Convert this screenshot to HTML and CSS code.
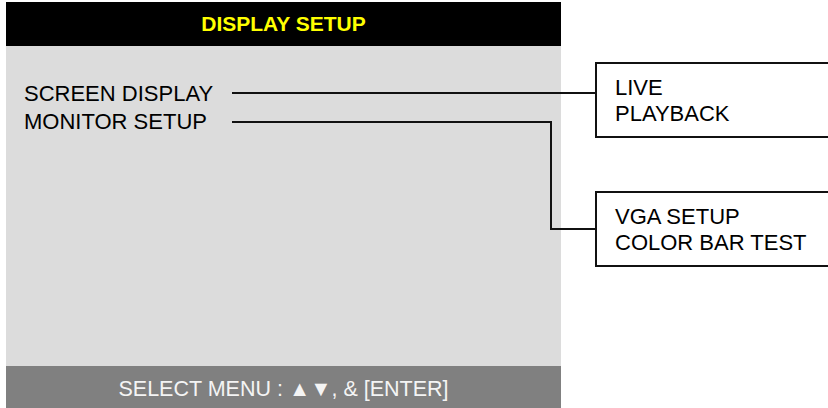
FILE: index.html
```html
<!DOCTYPE html>
<html lang="en">
<head>
<meta charset="UTF-8" />
<title>Display Setup</title>
<link rel="stylesheet" href="styles.css">
</head>
<body>

<div class="stage">
  <!-- OSD panel -->
  <div class="panel">
    <div class="panel-title">DISPLAY SETUP</div>
    <div class="panel-body">
      <div class="menu-item">SCREEN DISPLAY</div>
      <div class="menu-item">MONITOR SETUP</div>
    </div>
    <div class="panel-footer">SELECT MENU : &#9650;&#9660;, &amp; [ENTER]</div>
  </div>

  <!-- sub menus -->
  <div class="submenus">
    <div class="submenu">
      <div>LIVE</div>
      <div>PLAYBACK</div>
    </div>
    <div class="submenu">
      <div>VGA SETUP</div>
      <div>COLOR BAR TEST</div>
    </div>
  </div>

  <!-- connector lines -->
  <svg class="links" width="828" height="408" viewBox="0 0 828 408">
    <path d="M232 93 H597" />
    <path d="M232 122 H551 V229 H597" />
  </svg>
</div>

</body>
</html>
```

FILE: styles.css
```css
/* base */
html, body {
  margin: 0;
  height: 100%;
  overflow: hidden;
}
body {
  background: #fff;
  font-family: "Liberation Sans", Arial, sans-serif;
  font-size: 22px;
  color: #000;
}

.stage {
  position: relative;
  display: flex;
  align-items: flex-start;
  padding-top: 2px;
  width: 828px;
  height: 408px;
  box-sizing: border-box;
}

/* left OSD panel */
.panel {
  margin-left: 6px;
  width: 555px;
  height: 410px;
  display: flex;
  flex-direction: column;
  flex-shrink: 0;
  background: #dcdcdc;
}
.panel-title {
  height: 44px;
  line-height: 44px;
  background: #000;
  color: #ffff00;
  font-size: 21px;
  font-weight: bold;
  text-align: center;
}
.panel-body {
  flex: 1;
  padding: 34px 0 0 18px;
}
.menu-item {
  line-height: 28px;
}
.panel-footer {
  height: 46px;
  line-height: 46px;
  background: #808080;
  color: #f4f4f4;
  font-size: 21.5px;
  text-align: center;
}

/* right side boxes */
.submenus {
  display: flex;
  flex-direction: column;
  gap: 53px;
  margin-left: 34px;
  padding-top: 60px;
}
.submenu {
  width: 260px;
  height: 76px;
  box-sizing: border-box;
  border: 2px solid #111;
  padding: 11px 0 0 18px;
  line-height: 26px;
  background: #fff;
}

/* connectors */
.links {
  position: absolute;
  top: 0;
  left: 0;
  pointer-events: none;
}
.links path {
  fill: none;
  stroke: #111;
  stroke-width: 2;
}
```
